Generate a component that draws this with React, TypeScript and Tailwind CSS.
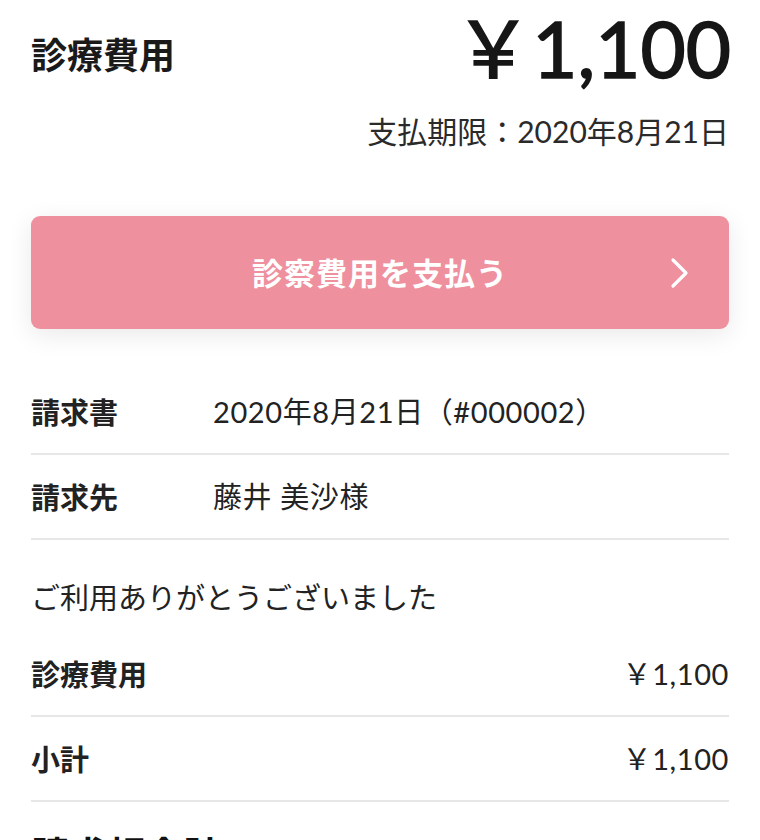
import React from "react";

const font = { fontFamily: 'Lato, "Noto Sans CJK JP", "Noto Sans", sans-serif' };

function Row({ label, value, right }: { label: string; value: string; right?: boolean }) {
  return (
    <div className="box-content flex h-[83px] items-center border-b-2 border-[#e7e7e7]">
      <div className="w-[182px] shrink-0 text-[29px] font-bold text-[#222]" style={{ fontFamily: '"Noto Sans CJK JP", sans-serif' }}>{label}</div>
      <div className={"flex-1 text-[29px] tracking-[0.6px] text-[#222] " + (right ? "text-right" : "")}>{value}</div>
    </div>
  );
}

export default function App() {
  return (
    <div className="min-h-[840px] w-[760px] overflow-hidden bg-white px-[31px]" style={font}>
      <div className="flex items-start justify-between">
        <div className="mt-[31px] text-[36px] font-bold leading-[44px] text-[#1a1a1a]" style={{ fontFamily: '"Noto Sans CJK JP", sans-serif' }}>診療費用</div>
        <div className="mr-[-2px] text-[78px] leading-[96px] text-[#161616] [-webkit-text-stroke:1.6px_#161616]">￥1,100</div>
      </div>
      <div className="mt-[15px] text-right text-[30px] leading-[40px] text-[#2a2a2a]">支払期限：2020年8月21日</div>

      <button className="relative mt-[65px] flex h-[113px] w-full items-center justify-center rounded-[9px] bg-[#ee909e] shadow-[0_6px_26px_rgba(0,0,0,0.09)]">
        <span className="text-[31px] font-bold tracking-[1px] text-white" style={{ fontFamily: '"Noto Sans CJK JP", sans-serif' }}>診察費用を支払う</span>
        <svg className="absolute right-[38px] top-1/2 -translate-y-1/2" width="22" height="32" viewBox="0 0 22 32" fill="none">
          <path d="M4 3 L17 16 L4 29" stroke="white" strokeWidth="3.2" strokeLinecap="round" strokeLinejoin="round" />
        </svg>
      </button>

      <div className="mt-[41px]">
        <Row label="請求書" value="2020年8月21日（#000002）" />
        <Row label="請求先" value="藤井 美沙様" />
        <div className="pb-[16px] pt-[40px] text-[29px] leading-[36px] text-[#222]">ご利用ありがとうございました</div>
        <Row label="診療費用" value="￥1,100" right />
        <Row label="小計" value="￥1,100" right />
        <div className="flex h-[100px] items-center justify-between">
          <div className="text-[38px] font-bold text-[#111]" style={{ fontFamily: '"Noto Sans CJK JP", sans-serif' }}>請求額合計</div>
          <div className="text-[34px] font-semibold text-[#111]">￥1,100</div>
        </div>
      </div>
    </div>
  );
}
